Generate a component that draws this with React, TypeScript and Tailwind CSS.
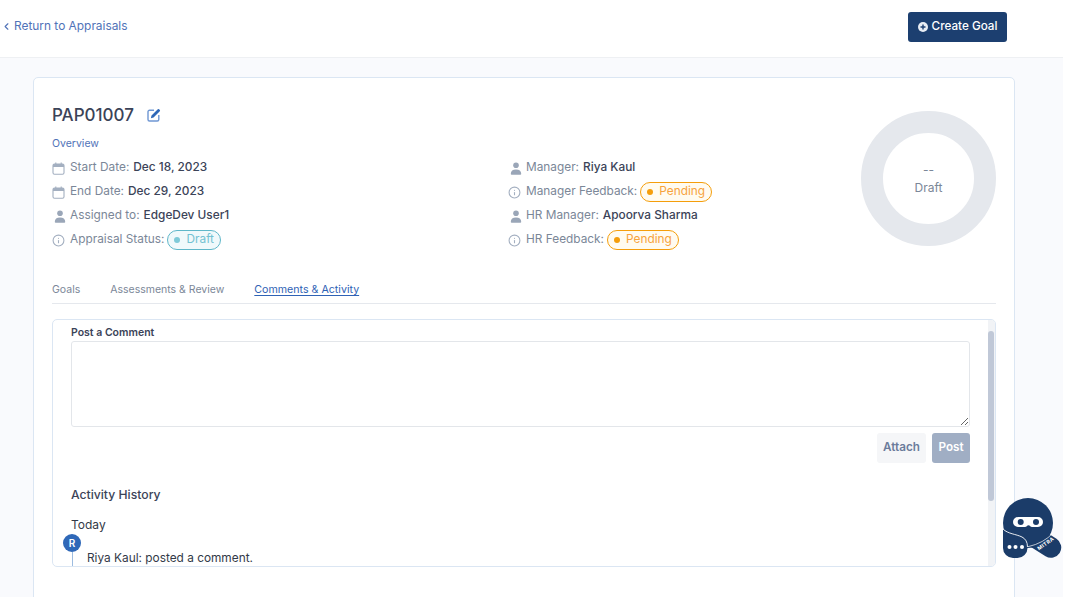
import React from 'react';
import { ChevronLeft, Info } from 'lucide-react';

function PersonIcon() {
    return (
        <svg width="12" height="13" viewBox="0 0 12 13" className="ml-[1.500px] shrink-0 text-[#9aa6b8]" fill="currentColor">
            <circle cx="6" cy="3.200" r="2.800" />
            <path d="M2 12.800c-.8 0-1.200-.4-1.200-1.100 0-2.600 1.900-4.200 5.200-4.200s5.200 1.600 5.200 4.200c0 .7-.4 1.100-1.200 1.100z" />
        </svg>
    );
}

function CalendarIcon() {
    return (
        <svg width="13" height="13" viewBox="0 0 13 13" className="shrink-0 text-[#a3afc0]">
            <rect x="1" y="2" width="11" height="10.300" rx="1.500" fill="none" stroke="currentColor" strokeWidth="1.100" />
            <path d="M1 3.500a1.500 1.500 0 0 1 1.500-1.500h8a1.500 1.500 0 0 1 1.500 1.500v1.500h-11z" fill="currentColor" />
            <path d="M3.800 .6v2.200M9.200 .6v2.200" stroke="currentColor" strokeWidth="1.100" />
        </svg>
    );
}

function EditIcon() {
    return (
        <svg width="14" height="14" viewBox="0 0 14 14" className="ml-[13px] shrink-0">
            <path d="M7 2.200H2.500A1.500 1.500 0 0 0 1 3.700v7.800A1.500 1.500 0 0 0 2.500 13h7.800a1.500 1.500 0 0 0 1.500-1.500V7" fill="none" stroke="#6f97d3" strokeWidth="1.400" />
            <path d="M4.500 7.600 10.800 1.300a.9.9 0 0 1 1.300 0l.7.7a.9.9 0 0 1 0 1.300L6.500 9.600l-2.600.6z" fill="#2f68b8" />
        </svg>
    );
}

function MitraLogo() {
    return (
        <svg width="60" height="62" viewBox="0 0 60 62" className="absolute left-[1002px] top-[497px]">
            <path d="M34 41 L49 50.500" stroke="#1b3c69" strokeWidth="20.500" strokeLinecap="round" />
            <circle cx="26" cy="26" r="25" fill="#1b3c69" />
            <path d="M1 32C8 38 25 36 25.500 51a10 10 0 0 1-10 10H11A10 10 0 0 1 1 51z" fill="#1b3c69" />
            <path d="M1 32C6 37 14 37 20 40c3.500 1.800 5.500 5 5.500 10" fill="none" stroke="#ffffff" strokeWidth="0.900" />
            <path d="M26 49.700Q42 46 51 36" fill="none" stroke="#ffffff" strokeWidth="0.700" />
            <path d="M16 20h20a5 5 0 0 1 0 10h-6c-1.500 0-2-1.800-3.500-1.800S24.500 30 23 30h-7a5 5 0 0 1 0-10z" fill="#ffffff" />
            <circle cx="18.700" cy="25" r="3" fill="#1b3c69" />
            <circle cx="34" cy="25" r="3" fill="#1b3c69" />
            <circle cx="7.500" cy="50" r="2" fill="#ffffff" />
            <circle cx="13.500" cy="50" r="2" fill="#ffffff" />
            <circle cx="20" cy="50" r="2" fill="#ffffff" />
            <text x="37" y="53.500" transform="rotate(-35 37 53.500)" fill="#ffffff" fontSize="5.200" fontWeight="700" letterSpacing="0.400" fontFamily="Inter, sans-serif">MITRA</text>
        </svg>
    );
}

function Badge({ label, tone }: { label: string; tone: 'draft' | 'pending' }) {
    const cls = tone === 'draft'
        ? 'border-[#5fb7c9] bg-[#f0f9fb] text-[#74c2d2]'
        : 'border-[#f59e0b] bg-[#fffbf0] text-[#f7a33c]';
    const dot = tone === 'draft' ? 'bg-[#7fcad8]' : 'bg-[#f59e0b]';
    return (
        <span className={`ml-[3px] inline-flex h-[20px] items-center gap-[6px] rounded-full border px-[6px] ${cls}`}>
            <span className={`h-[6px] w-[6px] rounded-full ${dot}`} />
            {label}
        </span>
    );
}

function Row({ icon, label, children }: { icon: React.ReactNode; label: string; children: React.ReactNode }) {
    return (
        <div className="flex h-[24px] items-center">
            <span className="flex w-[18px] shrink-0 items-center">{icon}</span>
            <span className="text-[#7b8798]">{label}</span>
            {children}
        </div>
    );
}

const Value = ({ children }: { children: React.ReactNode }) => (
    <span className="ml-[4px] font-medium text-[#3b4358]">{children}</span>
);

const info = <Info size={13} className="shrink-0 text-[#a3afc0]" />;

export default function App() {
    return (
        <div className="relative h-[597px] w-[1067px] overflow-hidden bg-white font-['Inter',sans-serif]">
            <div className="h-[597px] w-[1063px] bg-[#f9fafd]">
                <header className="flex h-[58px] items-start justify-between border-b border-[#eef0f3] bg-white pl-[1px] pr-[56px]">
                    <a className="mt-[18px] flex items-center gap-[2px] text-[11.900px] leading-[16px] text-[#5173b8]">
                        <ChevronLeft size={11} strokeWidth={2.500} />
                        Return to Appraisals
                    </a>
                    <button className="mt-[12px] flex h-[30px] w-[99px] items-center justify-center gap-[4px] rounded-[3px] bg-[#1c3f70] text-[11.700px] font-medium text-white">
                        <svg width="10" height="10" viewBox="0 0 10 10">
                            <circle cx="5" cy="5" r="5" fill="#e8edf4" />
                            <path d="M5 2.500v5M2.500 5h5" stroke="#1c3f70" strokeWidth="1.400" />
                        </svg>
                        Create Goal
                    </button>
                </header>

                <main className="pl-[33px] pt-[19px]">
                    <section className="h-[530px] w-[982px] rounded-t-[5px] border border-[#dbe6f3] bg-white px-[18px] pt-[25px]">
                        <div className="flex">
                            <div className="flex-1">
                                <div className="flex items-center">
                                    <h1 className="text-[17px] font-medium leading-[24px] text-[#3b4358]">PAP01007</h1>
                                    <EditIcon />
                                </div>
                                <p className="mt-[10px] text-[10.500px] leading-[14px] text-[#5173b8]">Overview</p>
                                <div className="mt-[5px] grid grid-cols-[456px_1fr] text-[11.850px]">
                                    <div>
                                        <Row icon={<CalendarIcon />} label="Start Date:"><Value>Dec 18, 2023</Value></Row>
                                        <Row icon={<CalendarIcon />} label="End Date:"><Value>Dec 29, 2023</Value></Row>
                                        <Row icon={<PersonIcon />} label="Assigned to:"><Value>EdgeDev User1</Value></Row>
                                        <Row icon={info} label="Appraisal Status:"><Badge label="Draft" tone="draft" /></Row>
                                    </div>
                                    <div>
                                        <Row icon={<PersonIcon />} label="Manager:"><Value>Riya Kaul</Value></Row>
                                        <Row icon={info} label="Manager Feedback:"><Badge label="Pending" tone="pending" /></Row>
                                        <Row icon={<PersonIcon />} label="HR Manager:"><Value>Apoorva Sharma</Value></Row>
                                        <Row icon={info} label="HR Feedback:"><Badge label="Pending" tone="pending" /></Row>
                                    </div>
                                </div>
                            </div>
                            <div className="mt-[8px] flex h-[135px] w-[135px] shrink-0 flex-col items-center justify-center rounded-full border-[22px] border-[#e5e8ed] text-[12px] leading-[18px] text-[#7b8798]">
                                <span>--</span>
                                <span>Draft</span>
                            </div>
                        </div>

                        <nav className="mt-[31px] flex h-[21px] gap-[30px] border-b border-[#e5e8ed] text-[10.500px] leading-[14px] text-[#7b8798]">
                            <span>Goals</span>
                            <span>Assessments &amp; Review</span>
                            <span className="h-[14px] text-[10.650px] text-[#2f62b5] underline underline-offset-2">Comments &amp; Activity</span>
                        </nav>

                        <div className="mt-[15px] flex h-[248px] overflow-hidden rounded-[5px] border border-[#dbe6f3]">
                            <div className="min-w-0 flex-1 pl-[18px] pr-[18px] pt-[6px]">
                                <label className="block text-[10.500px] font-semibold leading-[14px] text-[#3b4358]">Post a Comment</label>
                                <textarea className="mt-[1px] block h-[86px] w-full rounded-[3px] border border-[#e3e6ea] bg-white" />
                                <div className="mt-[6px] flex justify-end gap-[6px] text-[11.700px] font-semibold">
                                    <button className="h-[30px] w-[49px] rounded-[3px] bg-[#f5f6f8] text-[#6b7c9b]">Attach</button>
                                    <button className="h-[30px] w-[38px] rounded-[3px] bg-[#a0aec4] text-white">Post</button>
                                </div>
                                <h2 className="mt-[23px] text-[12.200px] font-medium leading-[18px] text-[#3b4358]">Activity History</h2>
                                <p className="mt-[12px] text-[12px] leading-[18px] text-[#333a48]">Today</p>
                                <div className="relative -ml-[8px]">
                                    <span className="flex h-[18px] w-[18px] items-center justify-center rounded-full bg-[#2f68b8] text-[10px] font-semibold text-white">R</span>
                                    <span className="ml-[8.500px] block h-[20px] w-px bg-[#9dbce0]" />
                                    <p className="absolute left-[24px] top-[15px] text-[11.850px] leading-[18px] text-[#333a48]">Riya Kaul: posted a comment.</p>
                                </div>
                            </div>
                            <div className="w-[7px] shrink-0 bg-[#f1f3f6] pt-[11px]">
                                <div className="h-[170px] w-[6px] rounded-full bg-[#c0c8d7]" />
                            </div>
                        </div>
                    </section>
                </main>
            </div>
            <MitraLogo />
        </div>
    );
}
